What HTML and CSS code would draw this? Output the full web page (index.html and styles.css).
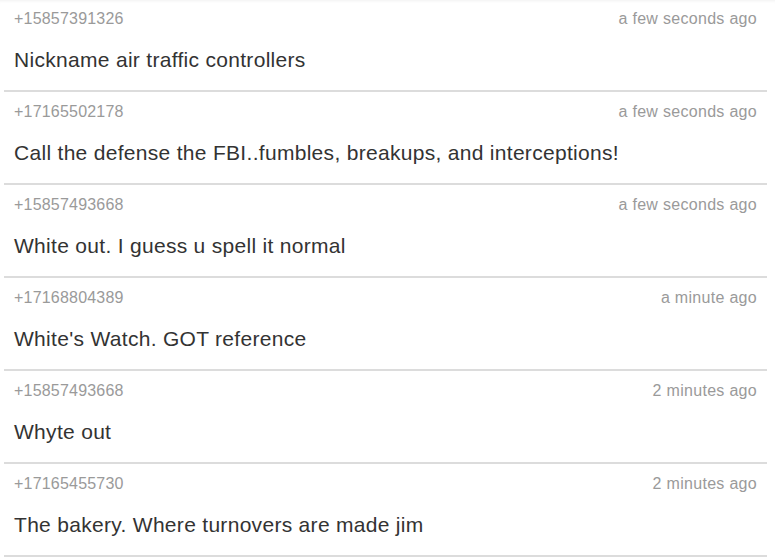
FILE: index.html
```html
<!DOCTYPE html>
<html lang="en">
<head>
<meta charset="utf-8">
<title>Messages</title>
<link rel="stylesheet" href="styles.css">
</head>
<body>
<div class="page">
  <ul class="feed">
    <li class="msg">
      <div class="meta"><span class="from">+15857391326</span><span class="time">a few seconds ago</span></div>
      <p class="text">Nickname air traffic controllers</p>
    </li>
    <li class="msg">
      <div class="meta"><span class="from">+17165502178</span><span class="time">a few seconds ago</span></div>
      <p class="text">Call the defense the FBI..fumbles, breakups, and interceptions!</p>
    </li>
    <li class="msg">
      <div class="meta"><span class="from">+15857493668</span><span class="time">a few seconds ago</span></div>
      <p class="text">White out. I guess u spell it normal</p>
    </li>
    <li class="msg">
      <div class="meta"><span class="from">+17168804389</span><span class="time">a minute ago</span></div>
      <p class="text">White's Watch. GOT reference</p>
    </li>
    <li class="msg">
      <div class="meta"><span class="from">+15857493668</span><span class="time">2 minutes ago</span></div>
      <p class="text">Whyte out</p>
    </li>
    <li class="msg">
      <div class="meta"><span class="from">+17165455730</span><span class="time">2 minutes ago</span></div>
      <p class="text">The bakery. Where turnovers are made jim</p>
    </li>
  </ul>
</div>
</body>
</html>
```
FILE: styles.css
```css
html, body {
  margin: 0;
  padding: 0;
  background: #ffffff;
}

body {
  font-family: "Liberation Sans", Arial, sans-serif;
  height: 560px;
  overflow: hidden;
}

.page {
  box-shadow: inset 0 3px 3px -2px rgba(0, 0, 0, 0.06);
  min-height: 560px;
}

.feed {
  list-style: none;
  margin: 0 8px 0 4px;
  padding: 0;
}

.msg {
  padding: 10px 10px 16px 10px;
  border-bottom: 2px solid #dcdcdc;
}

.msg:first-child {
  padding-top: 9px;
}

.meta {
  display: flex;
  justify-content: space-between;
  align-items: baseline;
  font-size: 16px;
  line-height: 20px;
  color: #9a9a9a;
}

.from {
  letter-spacing: 0.2px;
}

.time {
  letter-spacing: 0.3px;
}

.text {
  margin: 17px 0 0 0;
  font-size: 21px;
  line-height: 28px;
  letter-spacing: 0.3px;
  color: #333333;
}
```
